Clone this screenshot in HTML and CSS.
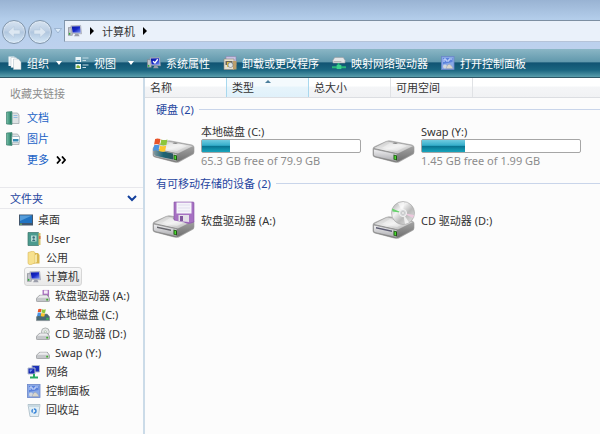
FILE: index.html
```html
<!DOCTYPE html>
<html lang="zh-CN">
<head>
  <meta charset="UTF-8" />
  <meta name="viewport" content="width=device-width, initial-scale=1.0" />
  <title>计算机</title>
  <link rel="stylesheet" href="styles.css">
</head>
<body>
  <!-- shared icons -->
  <svg class="defs" aria-hidden="true">
    <defs>
      <linearGradient id="gTop" x1="0" y1="0" x2="1" y2="1">
        <stop offset="0" stop-color="#c4c4c4" /><stop offset=".5" stop-color="#ededed" /><stop offset="1" stop-color="#a4a4a4" />
      </linearGradient>
      <linearGradient id="gSide" x1="0" y1="0" x2="0" y2="1">
        <stop offset="0" stop-color="#b4b4b4" /><stop offset="1" stop-color="#6e6e6e" />
      </linearGradient>
      <linearGradient id="gFront" x1="0" y1="0" x2="0" y2="1">
        <stop offset="0" stop-color="#f2f2f4" /><stop offset="1" stop-color="#a9a9ad" />
      </linearGradient>
      <linearGradient id="gTeal" x1="0" y1="0" x2="1" y2="0">
        <stop offset="0" stop-color="#7f979d" /><stop offset=".5" stop-color="#1b6475" /><stop offset="1" stop-color="#2a5560" />
      </linearGradient>
      <linearGradient id="gScreen" x1="0" y1="0" x2="1" y2="1">
        <stop offset="0" stop-color="#0717a0" /><stop offset=".5" stop-color="#1828c8" /><stop offset="1" stop-color="#7d98f4" />
      </linearGradient>
      <linearGradient id="gDisc" x1="0" y1="0" x2="1" y2="1">
        <stop offset="0" stop-color="#9f9f9f" /><stop offset=".35" stop-color="#f2f2f2" /><stop offset=".6" stop-color="#b9b9b9" /><stop offset="1" stop-color="#ececec" />
      </linearGradient>
    </defs>
    <symbol id="drive" viewBox="0 0 43 23">
      <path d="M1 14 L25 20 L42 11 L42 14 L26 23 L2 17Z" fill="#777" opacity=".4" />
      <path d="M1 9 Q1 7 3 6.500 L14 1.500 Q16 .5 19 1 L40 5 Q42 5.500 42 7.500 L42 12 Q42 13.500 40 14.500 L27 21.500 Q25 22.500 22 22 L3 17 Q1 16.500 1 15Z" fill="url(#gSide)" stroke="#999" stroke-width=".6" />
      <path d="M2 8 L15 1.500 L41 6 L26 13.500Z" fill="url(#gTop)" />
      <path d="M18 3 L35 6 L25 11 L10 8Z" fill="#fff" opacity=".35" />
      <path d="M22 2.500 L26 3 L24 4 L20.500 3.500Z" fill="#888" />
      <path d="M1.500 9 L25 14 L25 21.500 L3 16.500 Q1.500 16 1.500 14.500Z" fill="url(#gFront)" stroke="#888" stroke-width=".6" />
      <path d="M21.500 14.500 L25 15.500 L25 20.500 L21.500 19.500Z" fill="#225718" />
      <path d="M22.500 15.500 L24 16 L24 19.500 L22.500 19Z" fill="#4adb2e" />
    </symbol>
    <symbol id="flag" viewBox="0 0 14 13">
      <path d="M2 1 Q4 -.2 7 1 L6 6 Q3.500 5 1 6Z" fill="#e8542a" />
      <path d="M7.700 1.300 Q10.500 2.500 13.500 1.300 L12.500 6.500 Q9.500 7.500 6.800 6.300Z" fill="#8cc63c" />
      <path d="M1 6.800 Q3.500 5.800 6 6.900 L5 12 Q2.500 11 0 12Z" fill="#4a94e2" />
      <path d="M6.600 7.100 Q9.500 8.300 12.300 7.300 L11.300 12.300 Q8.500 13.300 5.600 12.200Z" fill="#fcc62c" />
    </symbol>
    <symbol id="minidrive" viewBox="0 0 15 8">
      <path d="M.5 4 L4 .5 H12 L14.500 4 V6.500 Q14.500 7.500 13.500 7.500 H1.500 Q.5 7.500 .5 6.500Z" fill="#c5c7ca" stroke="#84878b" stroke-width=".7" />
      <path d="M1.500 3.500 L4.500 1 H11.500 L13.500 3.500Z" fill="#ececee" />
      <rect x="11" y="4.500" width="2" height="1.800" fill="#3cab2b" />
    </symbol>
    <symbol id="computer" viewBox="0 0 15 14">
      <rect x=".5" y="3.500" width="4" height="8" fill="#c1c4cc" stroke="#81858e" stroke-width=".7" />
      <rect x="1" y="9" width="1.500" height="2" fill="#2fae36" />
      <path d="M3 1.500 L13.500 1 L14.500 10 L4.500 9.500Z" fill="#cdd0da" stroke="#9094a4" stroke-width=".6" />
      <path d="M4 2.300 L12.800 2 L13.600 8.800 L5 8.500Z" fill="url(#gScreen)" />
      <path d="M8 10 H11 L12.500 12.500 H6.500Z" fill="#9a9daa" />
    </symbol>
    <symbol id="panel" viewBox="0 0 14 14">
      <rect x=".5" y=".5" width="12.500" height="13" fill="#88a8e6" stroke="#6c86c8" stroke-width=".8" />
      <path d="M2 2 H11.500 V6 L2 8Z" fill="#5b82dc" />
      <path d="M3 6 V3 H5 V5 H8 V3 H11" fill="none" stroke="#dfe9ff" stroke-width=".9" />
      <circle cx="4" cy="10.500" r="2" fill="#d2d7de" />
      <path d="M5 12.500 Q7 7 9 8.500 T12 12.500Z" fill="#d8d5cb" stroke="#8f98a8" stroke-width=".4" />
    </symbol>
    <symbol id="book" viewBox="0 0 14 14">
      <path d="M4 2 H11.500 L13 4 V12.500 H4Z" fill="#dfe3e5" stroke="#9aa2a6" stroke-width=".7" />
      <path d="M7.500 4.500 H11.500 M7.500 6.500 H11.500" stroke="#7fb2e0" stroke-width=".8" />
      <path d="M.5 1 L6 .5 V13.500 L.5 13Z" fill="#459980" stroke="#387a69" stroke-width=".6" />
      <path d="M1.800 1.500 V12.500" stroke="#79bda7" />
      <path d="M4.500 1.500 V12.500" stroke="#2f7d68" />
    </symbol>
  </svg>

  <header class="titlebar">
    <div class="nav">
      <button class="nav-btn" aria-label="后退">
        <svg viewBox="0 0 14 14"><path d="M1 7 L7 1.500 V5 H13 V9 H7 V12.500Z" /></svg>
      </button>
      <button class="nav-btn" aria-label="前进">
        <svg viewBox="0 0 14 14"><path d="M13 7 L7 1.500 V5 H1 V9 H7 V12.500Z" /></svg>
      </button>
    </div>
    <button class="history" aria-label="历史记录">
      <svg viewBox="0 0 8 6"><path d="M.5 .5 H7.500 L4 5Z" fill="#dcebf9" stroke="#8ca6c4" stroke-width=".7" /></svg>
    </button>
    <nav class="address">
      <svg class="icon"><use href="#computer" /></svg>
      <span class="arrow"></span>
      <a href="#">计算机</a>
      <span class="arrow"></span>
    </nav>
  </header>

  <div class="toolbar">
    <button>
      <svg class="icon" viewBox="0 0 14 14"><path d="M.5 .5 H6.500 V10 H.5Z" fill="#f4f6f8" /><path d="M3 1.500 H8 L9.500 3 V11.500 H3Z" fill="#fff" stroke="#b4c2cc" stroke-width=".5" /><path d="M5.500 3 H10.500 L13 6 V13.500 H5.500Z" fill="#f8f8f8" stroke="#a9b8c3" stroke-width=".5" /></svg>
      <span>组织</span><i class="caret"></i>
    </button>
    <button class="views">
      <svg class="icon" viewBox="0 0 14 14"><path d="M.5 1 H6 V6 H.5Z M.5 8 H6 V13 H.5Z" fill="#e9f4f7" /><path d="M1.500 4 H5 V5.500 H1.500Z" fill="#448dc0" /><path d="M1.500 10 L3 9 L5 10.500 V12 H1.500Z" fill="#80ad36" /><path d="M7.500 2 H13.500 M7.500 4.500 H11 M7.500 9 H13.500 M7.500 11.500 H11" stroke="#c3dae3" /></svg>
      <span>视图</span><i class="caret"></i>
    </button>
    <button>
      <svg class="icon" viewBox="0 0 15 14"><use href="#computer" /><path d="M6.500 5 L8.500 7 L11.500 3" fill="none" stroke="#fff" stroke-width="1.500" /></svg>
      <span>系统属性</span>
    </button>
    <button>
      <svg class="icon" viewBox="0 0 14 14"><path d="M3 .5 H13 V9 H3Z" fill="#c8c0e4" stroke="#8b88aa" stroke-width=".6" /><path d="M1 3 H11 V13.500 H1Z" fill="#e4dfcf" stroke="#8d887d" stroke-width=".6" /><path d="M2.500 5 H9.500 V9 H2.500Z" fill="#68645a" /><path d="M4 6 H8 V11 H4Z" fill="#d9bc4e" /><path d="M10 5 H13.500 V13.500 H10Z" fill="#bb9e6c" /><circle cx="7.500" cy="9" r="2.500" fill="#dce5e8" stroke="#586068" stroke-width=".5" /></svg>
      <span>卸载或更改程序</span>
    </button>
    <button>
      <svg class="icon" viewBox="0 0 15 14"><path d="M1 4 L3 1 H12 L14 4 V7 H1Z" fill="#e3e4e6" stroke="#96999c" stroke-width=".6" /><path d="M2 5.500 H10" stroke="#aaa" /><path d="M7 7 V10 M0 11.500 H15" stroke="#27b879" stroke-width="2" /><path d="M5 9 H10 V13.500 H5Z" fill="#39d28c" /></svg>
      <span>映射网络驱动器</span>
    </button>
    <button>
      <svg class="icon"><use href="#panel" /></svg>
      <span>打开控制面板</span>
    </button>
  </div>

  <div class="content">
    <aside class="sidebar">
      <section class="favorites">
        <h2>收藏夹链接</h2>
        <a href="#"><svg class="icon"><use href="#book" /></svg><span>文档</span></a>
        <a href="#"><svg class="icon" viewBox="0 0 14 14"><use href="#book" /><rect x="6" y="4.500" width="7.500" height="6" fill="#fff" stroke="#8ba0a9" stroke-width=".5" /><path d="M7 7 H12.500 V9.500 H7Z" fill="#368bb5" /></svg><span>图片</span></a>
        <a href="#" class="more"><span>更多</span><svg viewBox="0 0 10 8"><path d="M1 .5 L4 4 L1 7.500 M6 .5 L9 4 L6 7.500" fill="none" stroke="#000" stroke-width="1.800" /></svg></a>
      </section>
      <button class="folders">
        <span>文件夹</span>
        <svg viewBox="0 0 10 7"><path d="M1 1 L5 5 L9 1" fill="none" stroke="#123f9c" stroke-width="2" /></svg>
      </button>
      <ul class="tree">
        <li><a href="#"><svg class="icon" viewBox="0 0 14 14"><path d="M0 1.500 H14 V12.500 H0Z" fill="#42566c" /><path d="M1 2.500 H13 V10 H1Z" fill="#2073c2" /><path d="M1 2.500 H13 L1 8Z" fill="#549cda" /><path d="M1 11.200 H3" stroke="#6ec26c" /></svg><span>桌面</span></a></li>
        <li class="level1"><a href="#"><svg class="icon" viewBox="0 0 14 14"><path d="M1 .5 H11.500 V13.500 H1Z" fill="#4a9a8e" stroke="#397268" stroke-width=".7" /><path d="M11.500 1 H13.500 V13 H11.500Z" fill="#d2c36b" /><path d="M12 4 H13.500 V7 H12Z" fill="#dc6850" /><path d="M4 3.500 H9.500 V9.500 H4Z" fill="#b6dbd4" /><circle cx="6.700" cy="5.500" r="1.200" fill="#386d79" /><path d="M5 9 Q6.700 5.500 8.500 9Z" fill="#386d79" /></svg><span>User</span></a></li>
        <li class="level1"><a href="#"><svg class="icon" viewBox="0 0 14 14"><path d="M6 2 H11 L12.500 4 V12.500 H6Z" fill="#d9b751" /><path d="M1 1.500 L6 0 L8 1.500 V12 L3 14 L1 12.500Z" fill="#f7e18e" stroke="#d1ad4a" stroke-width=".5" /><path d="M8 4 L10 3 V11 L8 12Z" fill="#f5e6a6" /></svg><span>公用</span></a></li>
        <li class="level1"><a href="#" class="selected"><svg class="icon"><use href="#computer" /></svg><span>计算机</span></a></li>
        <li class="level2"><a href="#"><svg class="icon" viewBox="0 0 15 14"><path d="M7 .5 H14 V8 H7Z" fill="#aa74bf" /><path d="M8.500 1 H12.500 V4.500 H8.500Z" fill="#f5edf8" /><use href="#minidrive" y="5.500" width="15" height="8" /></svg><span>软盘驱动器 (A:)</span></a></li>
        <li class="level2"><a href="#"><svg class="icon" viewBox="0 0 15 14"><path d="M.5 9 L4 6 H12 L14.500 9 V13 H.5Z" fill="#496a75" stroke="#7b8488" stroke-width=".7" /><path d="M11 10 H13.500 V12 H11Z" fill="#40bd50" /><use href="#flag" x="1" y="0" width="10" height="9" /></svg><span>本地磁盘 (C:)</span></a></li>
        <li class="level2"><a href="#"><svg class="icon" viewBox="0 0 15 14"><circle cx="10" cy="4.700" r="4.200" fill="#e5e7e7" stroke="#929797" stroke-width=".7" /><circle cx="10" cy="4.700" r="1.200" fill="#fff" stroke="#8caa8c" stroke-width=".6" /><use href="#minidrive" y="5.500" width="15" height="8" /></svg><span>CD 驱动器 (D:)</span></a></li>
        <li class="level2"><a href="#"><svg class="icon" viewBox="0 0 15 14"><use href="#minidrive" y="5.500" width="15" height="8" /></svg><span>Swap (Y:)</span></a></li>
        <li class="level1"><a href="#"><svg class="icon" viewBox="0 0 14 14"><path d="M5 .5 H12.500 V7 H5Z" fill="#1c31b8" stroke="#aeb8cb" /><path d="M1 3 H8 V9 H1Z" fill="#1729b0" stroke="#b3bdd1" /><path d="M2.500 4.500 H6 L3 7.500Z" fill="#6d8df0" /><path d="M7 9 V12 M3 12.500 H11" stroke="#27ab61" stroke-width="2" /></svg><span>网络</span></a></li>
        <li class="level1"><a href="#"><svg class="icon"><use href="#panel" /></svg><span>控制面板</span></a></li>
        <li class="level1"><a href="#"><svg class="icon" viewBox="0 0 14 14"><path d="M1 1.500 H13 L11.500 13.500 H3Z" fill="#e2eef5" stroke="#9db1bd" stroke-width=".7" /><path d="M1.500 2 L12.500 2 L12 4 H2Z" fill="#c8d9e2" /><circle cx="7" cy="8" r="2" fill="none" stroke="#3985d8" stroke-width="1.400" stroke-dasharray="3.200 1" /></svg><span>回收站</span></a></li>
      </ul>
    </aside>

    <main class="files">
      <div class="columns">
        <button>名称</button>
        <button class="sorted">类型</button>
        <button>总大小</button>
        <button>可用空间</button>
      </div>

      <section class="group">
        <h3>硬盘 (2)</h3>
        <div class="items">
          <div class="item">
            <svg class="big-icon" viewBox="0 0 43 38"><use href="#drive" y="13" width="43" height="23" /><path d="M2 22.500 L21 26.500 V32.500 L4 29 Q2 28.500 2 27Z" fill="url(#gTeal)" /><use href="#flag" x="1" y="11" width="15" height="14" /></svg>
            <div class="info">
              <div class="name">本地磁盘 (C:)</div>
              <div class="bar"><div class="used" style="width: 18%"></div></div>
              <div class="free">65.3 GB free of 79.9 GB</div>
            </div>
          </div>
          <div class="item">
            <svg class="big-icon" viewBox="0 0 43 38"><use href="#drive" y="13" width="43" height="23" /></svg>
            <div class="info">
              <div class="name">Swap (Y:)</div>
              <div class="bar"><div class="used" style="width: 27%"></div></div>
              <div class="free">1.45 GB free of 1.99 GB</div>
            </div>
          </div>
        </div>
      </section>

      <section class="group">
        <h3>有可移动存储的设备 (2)</h3>
        <div class="items">
          <div class="item">
            <svg class="big-icon" viewBox="0 0 43 38">
              <use href="#drive" y="14" width="43" height="23" />
              <path d="M5 25.500 L19 28.500 V30 L5 27Z" fill="#66666c" />
              <path d="M22 1 H41 Q42 1 42 2 V21 Q36 24 32 21 L22 19Z" fill="#a671c2" stroke="#8752a6" stroke-width=".6" />
              <path d="M24.500 1.500 H39.500 V12.500 H24.500Z" fill="#f5f4fa" />
              <path d="M26 4 H38 M26 7 H38 M26 10 H38" stroke="#dad6e8" stroke-width=".7" />
              <path d="M26.500 14 H37 V21 L26.500 20Z" fill="#e3dfe8" />
              <path d="M28 15 H31 V20 H28Z" fill="#80569c" />
            </svg>
            <div class="info"><div class="name">软盘驱动器 (A:)</div></div>
          </div>
          <div class="item">
            <svg class="big-icon" viewBox="0 0 43 38">
              <use href="#drive" y="15" width="43" height="23" />
              <path d="M4 26 L20 29.500 V31 L4 27.500Z" fill="#5c5c72" />
              <circle cx="31" cy="12" r="11.500" fill="url(#gDisc)" stroke="#a9a9a9" stroke-width=".7" />
              <path d="M31 12 L20 7.500 L20.500 10.500Z" fill="#68d26d" />
              <path d="M31 12 L26 2 L32 1Z" fill="#fff" opacity=".6" />
              <path d="M31 12 L42 14 L41 17Z" fill="#ecc9dd" />
              <path d="M31 12 L37 21.500 L33 23Z" fill="#fff" opacity=".7" />
              <circle cx="31" cy="12" r="3.500" fill="#d2d4d6" stroke="#f5f5f5" />
              <circle cx="31" cy="12" r="1.300" fill="#fff" stroke="#aaa" stroke-width=".5" />
            </svg>
            <div class="info"><div class="name">CD 驱动器 (D:)</div></div>
          </div>
        </div>
      </section>
    </main>
  </div>
</body>
</html>
```
FILE: styles.css
```css
* {
  box-sizing: border-box;
}
body {
  margin: 0;
  min-height: 100vh;
  display: flex;
  flex-direction: column;
  font-family: 'Noto Sans', 'Noto Sans CJK SC', sans-serif;
  font-size: 11px;
  line-height: 15px;
  color: #333;
  background: #fcfcfc;
}
button {
  padding: 0;
  border: none;
  background: none;
  font: inherit;
  color: inherit;
  cursor: pointer;
}
a {
  color: inherit;
  text-decoration: none;
}
h2, h3 {
  margin: 0;
  font-size: 11px;
  font-weight: normal;
}
.defs {
  position: absolute;
  width: 0;
  height: 0;
}
.icon {
  width: 14px;
  height: 14px;
  flex: none;
}

/* title bar */
.titlebar {
  display: flex;
  padding: 20px 0 7px 2px;
  background: linear-gradient(#99b3d3 0, #b3cdea 19px, #b8d0ed 30px, #bdd1ed 100%);
}
.nav {
  display: flex;
  gap: 2px;
}
.nav-btn {
  display: flex;
  align-items: center;
  justify-content: center;
  width: 24px;
  height: 24px;
  margin-bottom: -2px;
  border: 1px solid #7f94aa;
  border-radius: 50%;
  background: linear-gradient(#d5e2f0, #bccfe4 45%, #b0c6de 50%, #d4e7f7);
  box-shadow: inset 0 0 2px #fff;
}
.nav-btn svg {
  width: 14px;
  height: 14px;
  fill: #dce7f2;
  stroke: #b3c5da;
  stroke-width: .5;
}
.history {
  width: 12px;
  display: flex;
  align-items: center;
  justify-content: center;
}
.history svg {
  width: 8px;
  height: 6px;
}
.address {
  flex: 1;
  display: flex;
  align-items: center;
  height: 22px;
  padding-left: 3px;
  border: solid #8297ae;
  border-width: 1px 0 1px 1px;
  border-top-color: #7d8fa2;
  border-bottom-color: #b5c3d8;
  background: #eaf1fa;
}
.arrow {
  margin: 0 8px;
  border: solid transparent;
  border-width: 4px 0 4px 4px;
  border-left-color: #000;
}

/* command bar */
.toolbar {
  display: flex;
  align-items: center;
  gap: 13px;
  height: 29px;
  padding-left: 8px;
  color: #fff;
  background: linear-gradient(#8ab6c5 0, #6299ad 45%, #115473 50%, #1a6580 75%, #5a9eac 100%);
  border-bottom: 1px solid #2e5867;
  text-shadow: 0 1px 2px #0a3a50;
  white-space: nowrap;
}
.toolbar button {
  display: flex;
  align-items: center;
}
.toolbar .icon {
  margin-right: 5px;
}
.caret {
  margin-left: 7px;
  border: solid transparent;
  border-width: 4px 3px 0;
  border-top-color: #fff;
}
.views .caret {
  margin-left: 12px;
}

.content {
  flex: 1;
  display: flex;
}

/* left pane */
.sidebar {
  width: 145px;
  flex: none;
  border-right: 2px solid #cbdbe8;
}
.favorites {
  padding: 8px 6px 17px;
  color: #1a62c6;
}
.favorites h2 {
  margin-bottom: 6px;
  padding-left: 4px;
  color: #8c8c8c;
}
.favorites a {
  display: flex;
  align-items: center;
  gap: 7px;
  height: 21px;
}
.favorites .more {
  padding-left: 21px;
}
.more svg {
  width: 10px;
  height: 8px;
}
.folders {
  display: flex;
  align-items: center;
  justify-content: space-between;
  width: 100%;
  height: 22px;
  padding: 0 6px 0 10px;
  border: solid #e8e8ec;
  border-width: 1px 0;
  color: #1f459f;
}
.folders svg {
  width: 10px;
  height: 7px;
}
.tree {
  margin: 0;
  padding: 1px 0 0 16px;
  list-style: none;
}
.tree li {
  display: flex;
}
.tree a {
  display: flex;
  align-items: center;
  gap: 5px;
  height: 19px;
  padding: 0 2px;
  border: 1px solid transparent;
  border-radius: 3px;
  white-space: nowrap;
}
.tree .level1 {
  padding-left: 8px;
}
.tree .level2 {
  padding-left: 17px;
}
.tree .selected {
  border-color: #d6d6d6;
  background: linear-gradient(#f8f8f8, #e8e8e8);
}

/* file list */
.files {
  flex: 1;
  min-width: 0;
}
.columns {
  display: flex;
  height: 20px;
  background: linear-gradient(#fff 40%, #f4f5f7 50%, #f1f2f4);
  border-bottom: 1px solid #dcdee2;
}
.columns button {
  position: relative;
  width: 82px;
  padding-left: 5px;
  text-align: left;
  border-right: 1px solid #e0e2e5;
}
.columns .sorted {
  border-right-color: #a8d8ee;
  background: linear-gradient(#f4fafd 40%, #e6f4fb 50%, #e0f1fa);
  box-shadow: -1px 0 #a8d8ee;
}
.sorted::before {
  content: "";
  position: absolute;
  top: 2px;
  left: 38px;
  border: solid transparent;
  border-width: 0 3px 3px;
  border-bottom-color: #4b7e9c;
}
.group h3 {
  display: flex;
  align-items: center;
  gap: 5px;
  height: 22px;
  padding-left: 11px;
  color: #1f459f;
}
.group h3::after {
  content: "";
  flex: 1;
  height: 1px;
  background: #c9d5ea;
}
.items {
  display: grid;
  grid-template-columns: repeat(auto-fill, 220px);
  padding-left: 7px;
}
.item {
  display: flex;
  align-items: center;
  gap: 6px;
  height: 52px;
}
.big-icon {
  width: 43px;
  height: 38px;
  flex: none;
}
.bar {
  width: 160px;
  height: 14px;
  border: 1px solid #a6a6a6;
  border-radius: 2px;
  background: #fff;
}
.used {
  height: 100%;
  background: linear-gradient(#6fcbe0, #35aecb 45%, #08718f 50%, #18a6bd);
}
.free {
  color: #8c8c8c;
}
```
